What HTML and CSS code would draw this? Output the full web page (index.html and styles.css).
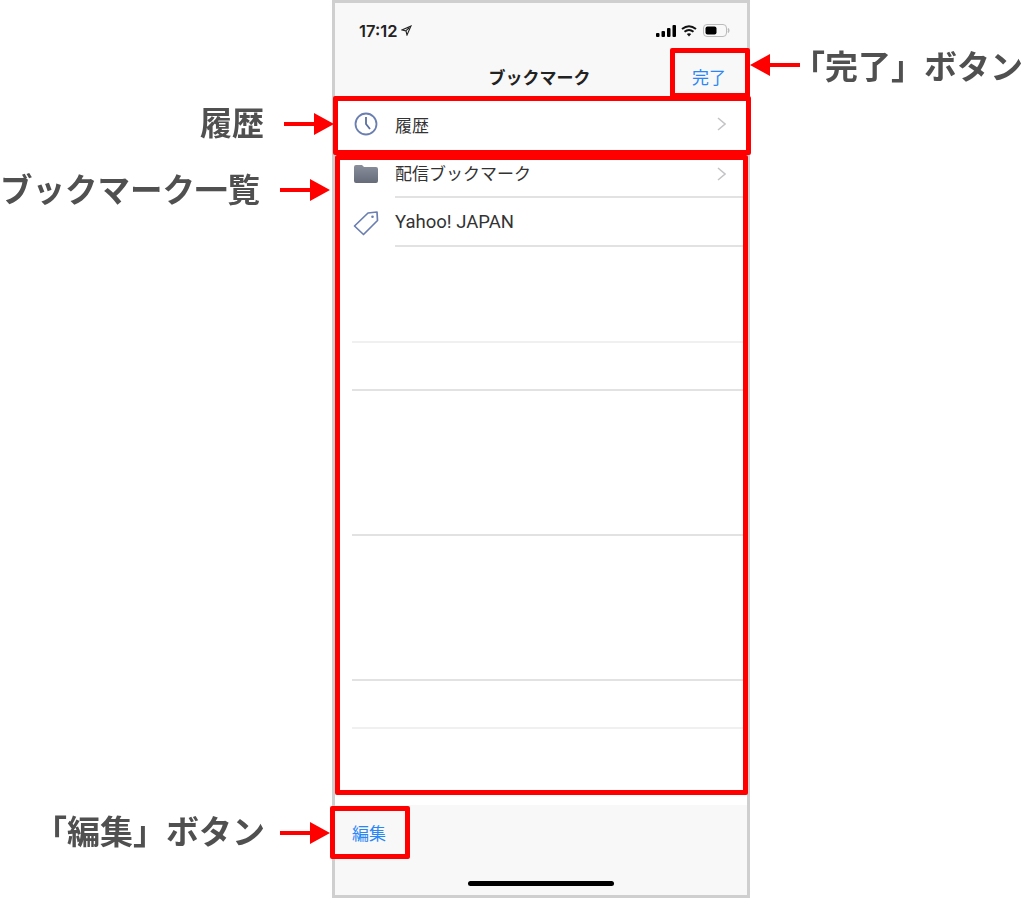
FILE: index.html
```html
<html>
<head>
<title>ブックマーク</title>
<link rel="stylesheet" href="styles.css">
</head>
<body>

<div class="stage">

  <div class="phone">
    <div class="header">
      <div class="status">
        <span class="time">17:12</span>
        <svg class="locate" width="11" height="11" viewBox="0 0 11 11"><path d="M10 1 L1 5 L5 6 L6 10 Z M8 3 L5 5.6" fill="none" stroke="#222" stroke-width="1.1"/></svg>
        <svg class="signal" width="20" height="12" viewBox="0 0 20 12"><rect x="0" y="8" width="3.5" height="4" rx="1"/><rect x="5.5" y="6" width="3.5" height="6" rx="1"/><rect x="11" y="3" width="3.5" height="9" rx="1"/><rect x="16.5" y="0" width="3.5" height="12" rx="1"/></svg>
        <svg class="wifi" width="16" height="12" viewBox="0 0 16 12"><path d="M1 4 Q8 -1.5 15 4 M3.5 6.8 Q8 3.2 12.5 6.8" fill="none" stroke="#111" stroke-width="2"/><path d="M5.8 9 Q8 7.4 10.2 9 L8 11.5 Z" fill="#111"/></svg>
        <svg class="battery" width="27" height="13" viewBox="0 0 27 13"><rect x="0.5" y="0.5" width="23" height="12" rx="3.5" fill="none" stroke="#bbb"/><rect x="2.5" y="2.5" width="11" height="8" rx="2" fill="#000"/><path d="M25 4.5 Q26.5 6.5 25 8.5" fill="none" stroke="#bbb" stroke-width="1.5"/></svg>
      </div>
      <div class="nav">
        <span class="nav-title">ブックマーク</span>
        <span class="link nav-done">完了</span>
      </div>
    </div>

    <div class="list">
      <div class="row row-history">
        <svg class="icon" width="26" height="26" viewBox="0 0 26 26"><circle cx="13" cy="13" r="10.5" fill="none" stroke="#6a7fb0" stroke-width="1.8"/><path d="M13 6 V13 L17 18" fill="none" stroke="#5a6f9f" stroke-width="1.8"/></svg>
        <span class="row-text">履歴</span>
        <svg class="chevron" width="9" height="14" viewBox="0 0 9 14"><path d="M1 1 L8 7 L1 13" fill="none" stroke="#c4c4c8" stroke-width="1.5"/></svg>
      </div>
      <div class="row row-folder">
        <svg class="icon" width="26" height="20" viewBox="0 0 26 20"><path d="M1 3 Q1 1 3 1 H9 L11 3 H23 Q25 3 25 5 V17 Q25 19 23 19 H3 Q1 19 1 17 Z" fill="url(#folderfill)"/><defs><linearGradient id="folderfill" x1="0" y1="0" x2="0" y2="1"><stop offset="0" stop-color="#8a8f9c"/><stop offset="1" stop-color="#666b7a"/></linearGradient></defs></svg>
        <span class="row-text">配信ブックマーク</span>
        <svg class="chevron" width="9" height="14" viewBox="0 0 9 14"><path d="M1 1 L8 7 L1 13" fill="none" stroke="#c4c4c8" stroke-width="1.5"/></svg>
      </div>
      <div class="row row-tag">
        <svg class="icon" width="26" height="26" viewBox="0 0 26 26"><path d="M1.5 16 L15 3 L24 2 L24.5 10.5 L10.5 24.5 Z" fill="none" stroke="#6a7fb0" stroke-width="1.7" stroke-linejoin="round"/><circle cx="19.5" cy="6.8" r="1.3" fill="#6a7fb0"/></svg>
        <span class="row-text row-latin">Yahoo! JAPAN</span>
      </div>
      <div class="line line-light gap-2"></div>
      <div class="line gap-1"></div>
      <div class="line gap-3"></div>
      <div class="line gap-3"></div>
      <div class="line line-light gap-1"></div>
    </div>

    <div class="toolbar">
      <span class="link toolbar-edit">編集</span>
      <div class="home-bar"></div>
    </div>
  </div>

  <!-- annotation layer -->
  <div class="mark mark-done"></div>
  <div class="mark mark-history"></div>
  <div class="mark mark-list"></div>
  <div class="mark mark-edit"></div>

  <span class="label label-done">「完了」ボタン</span>
  <span class="label label-history">履歴</span>
  <span class="label label-list">ブックマーク一覧</span>
  <span class="label label-edit">「編集」ボタン</span>

  <svg class="arrow arrow-done" width="50" height="24" viewBox="0 0 50 24"><path d="M50 10 H20 V1 L0 12 L20 23 V14 H50 Z" fill="#f00"/></svg>
  <svg class="arrow arrow-history" width="50" height="24" viewBox="0 0 50 24"><path d="M0 10 H30 V1 L50 12 L30 23 V14 H0 Z" fill="#f00"/></svg>
  <svg class="arrow arrow-list" width="50" height="24" viewBox="0 0 50 24"><path d="M0 10 H30 V1 L50 12 L30 23 V14 H0 Z" fill="#f00"/></svg>
  <svg class="arrow arrow-edit" width="50" height="24" viewBox="0 0 50 24"><path d="M0 10 H30 V1 L50 12 L30 23 V14 H0 Z" fill="#f00"/></svg>

</div>

</body>
</html>
```

FILE: styles.css
```css
* {
  box-sizing: border-box;
}

body {
  margin: 0;
  background: #fff;
  font-family: 'Noto Sans CJK JP', 'Noto Sans', sans-serif;
}

.stage {
  position: relative;
  width: 1024px;
  height: 899px;
  overflow: hidden;
  padding-left: 332px;
  filter: blur(0.5px);
}

.phone {
  display: flex;
  flex-direction: column;
  width: 418px;
  height: 898px;
  border: 3px solid #cfcfcf;
  background: #fff;
}

.header {
  height: 94px;
  background: #f8f8f8;
}

.status {
  display: flex;
  align-items: center;
  height: 52px;
  padding: 3px 17px 0 24px;
  color: #222;
}

.time {
  font-family: Inter, sans-serif;
  font-size: 16.5px;
  font-weight: 600;
}

.locate {
  margin-left: 4px;
  margin-right: auto;
}

.signal {
  margin-right: 5px;
}

.wifi {
  margin-right: 6px;
}

.nav {
  position: relative;
  display: flex;
  justify-content: center;
  align-items: center;
  height: 42px;
}

.nav-title {
  margin-right: 3px;
  font-size: 17px;
  font-weight: 700;
  color: #222;
}

.link {
  font-size: 17px;
  color: #2a86f6;
}

.nav-done {
  position: absolute;
  right: 21px;
}

.list {
  display: flex;
  flex-direction: column;
  flex-grow: 1;
  background: #fff;
}

.row {
  display: flex;
  align-items: center;
  padding-left: 18px;
  padding-right: 21px;
}

.row-history {
  height: 54px;
}

.row-folder {
  height: 47px;
}

.row-tag {
  height: 49px;
}

.row .icon {
  flex-shrink: 0;
  width: 26px;
  margin-right: 16px;
}

.row-text {
  flex-grow: 1;
  font-size: 17px;
  color: #333;
  height: 100%;
  display: flex;
  align-items: center;
}

.row-folder .row-text,
.row-tag .row-text {
  border-bottom: 2px solid #e2e2e2;
  margin-right: -21px;
}

.row-folder .row-text {
  margin-right: -30px;
  padding-bottom: 2px;
}

.row-latin {
  font-family: Roboto, sans-serif;
  font-size: 18.5px;
}

.chevron {
  position: relative;
  flex-shrink: 0;
}

.row-folder .chevron {
  top: -1px;
}

.row-folder .icon {
  position: relative;
  top: -1px;
}

.line {
  margin-left: 17px;
  border-bottom: 2px solid #e2e2e2;
}

.line-light {
  border-bottom-color: #f0f0f0;
}

.gap-1 {
  height: 48px;
}

.gap-2 {
  height: 96px;
}

.gap-3 {
  height: 145px;
}

.toolbar {
  display: flex;
  flex-direction: column;
  height: 90px;
  background: #f8f8f8;
}

.toolbar-edit {
  margin: 15px 0 0 17px;
}

.home-bar {
  width: 146px;
  height: 5px;
  margin: auto auto 9px auto;
  border-radius: 3px;
  background: #000;
}

/* red boxes over the screenshot */
.mark {
  position: absolute;
  border: 5px solid #f00;
  border-radius: 2px;
}

.mark-done {
  left: 670px;
  top: 48px;
  width: 80px;
  height: 50px;
}

.mark-history {
  left: 333px;
  top: 96px;
  width: 418px;
  height: 59px;
}

.mark-list {
  left: 335px;
  top: 155px;
  width: 413px;
  height: 640px;
}

.mark-edit {
  left: 330px;
  top: 806px;
  width: 80px;
  height: 53px;
}

.label {
  position: absolute;
  font-size: 33px;
  font-weight: 700;
  line-height: 40px;
  color: #505050;
  white-space: nowrap;
}

.label-done {
  left: 792px;
  top: 45px;
}

.label-history {
  left: 200px;
  top: 101px;
  font-size: 32px;
}

.label-list {
  left: 0;
  top: 168px;
  font-size: 32.5px;
}

.label-edit {
  left: 34px;
  top: 810px;
}

.arrow {
  position: absolute;
}

.arrow-done {
  left: 750px;
  top: 53px;
}

.arrow-history {
  left: 284px;
  top: 112px;
}

.arrow-list {
  left: 280px;
  top: 178px;
}

.arrow-edit {
  left: 280px;
  top: 821px;
}
```
